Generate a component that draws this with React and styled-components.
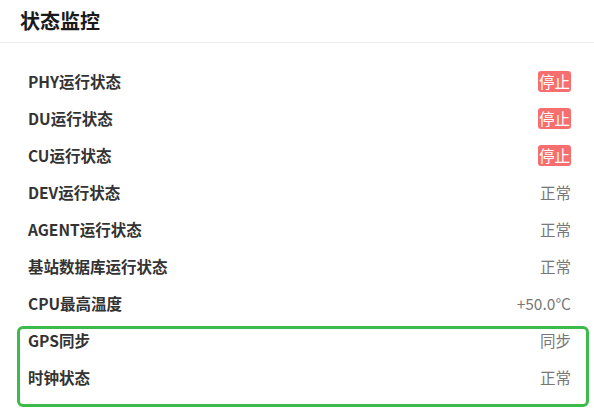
import styled, { createGlobalStyle } from 'styled-components'

const GlobalStyle = createGlobalStyle`
    body {
        margin: 0;
        background: #ffffff;
        font-family: "Noto Sans CJK SC", "Noto Sans", sans-serif;
    }
`

const Panel = styled.div`
    width: 594px;
    height: 419px;
    background: #ffffff;
    overflow: hidden;
`

const Header = styled.div`
    height: 42px;
    display: flex;
    align-items: center;
    padding: 0 20px;
    border-bottom: 1px solid #ebedf2;
    box-sizing: content-box;
`

const Title = styled.h2`
    margin: 0;
    font-size: 20px;
    font-weight: 700;
    color: #1a1a1a;
    line-height: 1;
`

const List = styled.div`
    display: flex;
    flex-direction: column;
    padding: 20px 23px 0 28px;
`

const Row = styled.div`
    height: 37px;
    display: flex;
    align-items: center;
    justify-content: space-between;
`

const Label = styled.span`
    font-size: 15.5px;
    font-weight: 700;
    color: #333333;
    line-height: 1;
`

const Value = styled.span`
    font-size: 15.5px;
    color: #777777;
    line-height: 1;
`

const Stopped = styled.span`
    display: inline-flex;
    align-items: center;
    height: 21px;
    padding: 0 1px;
    border-radius: 3px;
    background: #f76e6e;
    color: #ffffff;
    font-size: 15.5px;
    line-height: 1;
`

// зелёная рамка поверх двух строк
const Highlight = styled.div`
    position: relative;

    &::after {
        content: '';
        position: absolute;
        top: 4px;
        bottom: -11px;
        left: -11px;
        right: -18px;
        border: 3px solid #3cba4b;
        border-radius: 6px;
        pointer-events: none;
    }
`

const rows = [
    { label: 'PHY运行状态', value: '停止', stop: true },
    { label: 'DU运行状态', value: '停止', stop: true },
    { label: 'CU运行状态', value: '停止', stop: true },
    { label: 'DEV运行状态', value: '正常' },
    { label: 'AGENT运行状态', value: '正常' },
    { label: '基站数据库运行状态', value: '正常' },
    { label: 'CPU最高温度', value: '+50.0°C' },
]

const marked = [
    { label: 'GPS同步', value: '同步' },
    { label: '时钟状态', value: '正常' },
]

const StatusRow = ({ item }) => (
    <Row>
        <Label>{item.label}</Label>
        {item.stop ? <Stopped>{item.value}</Stopped> : <Value>{item.value}</Value>}
    </Row>
)

const App = () => {
    return (
        <Panel>
            <GlobalStyle />
            <Header>
                <Title>状态监控</Title>
            </Header>
            <List>
                {rows.map((item) => <StatusRow key={item.label} item={item} />)}
                <Highlight>
                    {marked.map((item) => <StatusRow key={item.label} item={item} />)}
                </Highlight>
            </List>
        </Panel>
    )
}

export default App
